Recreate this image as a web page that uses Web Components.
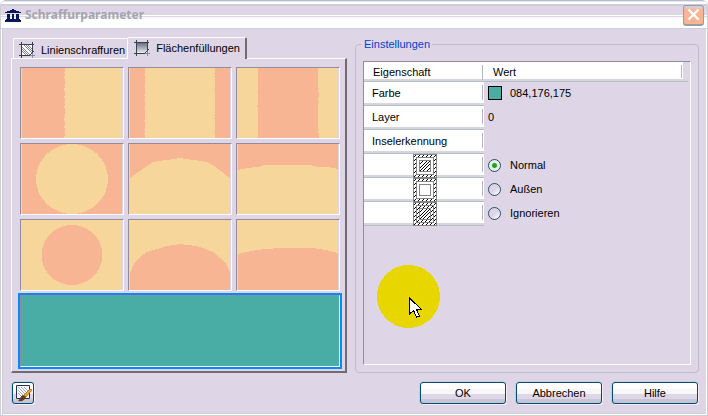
<!DOCTYPE html>
<html lang="de">
<head>
<meta charset="utf-8">
<title>Schraffurparameter</title>
<style>
  :root {
    --face: #ded6e7;
    --shade: #948c9c;
    --dark: #736b73;
    --line: #bdbdc6;
    --sand: #f7d69c;
    --salmon: #f7b594;
    --teal: #4aada5;
  }
  html, body { margin: 0; height: 100%; }
  body { font: 11px/14px "Liberation Sans", Arial, sans-serif; color: #000; background: #fff; }
</style>
</head>
<body>
<dialog-window heading="Schraffurparameter">
  <tab-panel>
    <swatch-grid></swatch-grid>
  </tab-panel>
  <settings-group heading="Einstellungen">
    <property-table></property-table>
  </settings-group>
  <tool-button slot="tools"></tool-button>
  <push-button slot="actions">OK</push-button>
  <push-button slot="actions">Abbrechen</push-button>
  <push-button slot="actions">Hilfe</push-button>
  <click-marker slot="overlay"></click-marker>
</dialog-window>

<script>
const define = (name, html, setup) => {
  const template = document.createElement('template');
  template.innerHTML = html;
  customElements.define(name, class extends HTMLElement {
    connectedCallback() {
      if (this.shadowRoot) return;
      const root = this.attachShadow({ mode: 'open' });
      root.append(template.content.cloneNode(true));
      if (setup) setup(this, root);
    }
  });
};

const setHeading = (host, root) => {
  root.querySelector('.heading').textContent = host.getAttribute('heading');
};

define('dialog-window', `
<style>
  :host { display: flex; flex-direction: column; position: relative; box-sizing: border-box; min-height: 100vh;
    background: var(--face); border: 1px solid #ceced6; border-top: 0; border-radius: 6px 6px 0 0; overflow: hidden;
    box-shadow: inset 1px 0 #fff, inset 2px 0 #ceced6, inset -1px 0 #fff, inset 0 -1px #fff, inset 0 -2px #ceced6; }
  header { display: flex; align-items: center; gap: 4px; box-sizing: border-box; height: 29px; padding: 2px 3px 0 4px;
    border-bottom: 1px solid #ceced6;
    background: linear-gradient(#b5bdce 0 1px, #e7e7ef 1px 2px, #fff 2px 4px, #ceced6 4px 6px, var(--face) 6px 15px, #fff 15px 16px, var(--face) 16px 17px, #f7f7f7 17px 19px, #fff 19px); }
  h1 { flex: 1; margin: 0; font: bold 12px/16px "Noto Sans", sans-serif; color: #a5a5ad; }
  .close { width: 21px; height: 21px; padding: 0; border: 1px solid #9c9ca5; border-bottom-width: 2px; border-radius: 3px;
    background: linear-gradient(#d6ced6 0 2px, var(--salmon) 3px); display: grid; place-items: center; }
  main { display: grid; grid-template-columns: minmax(0, 336fr) minmax(0, 344fr); gap: 8px; padding: 8px 8px 0 10px; }
  footer { display: flex; align-items: start; justify-content: space-between; padding: 9px 9px 8px 11px; }
  .actions { display: flex; gap: 10px; }
</style>
<header>
  <svg width="16" height="13" viewBox="0 0 16 13" shape-rendering="crispEdges" fill="#08185a" aria-hidden="true">
    <path d="M7 0h2v1h2v1h3v1h2v1H0V3h2V2h3V1h2zM2 5h3v5H2zM7 5h2v5H7zM11 5h3v5h-3zM1 10h14v1H1zM0 11h16v2H0z"/>
  </svg>
  <h1 class="heading"></h1>
  <button class="close" aria-label="Schließen">
    <svg width="13" height="13" viewBox="0 0 13 13" aria-hidden="true"><path d="M1.500 1.500l10 10M11.500 1.500l-10 10" stroke="#fff" stroke-width="2.400"/></svg>
  </button>
</header>
<main><slot></slot></main>
<footer><slot name="tools"></slot><div class="actions"><slot name="actions"></slot></div></footer>
<slot name="overlay"></slot>`, setHeading);

define('tab-panel', `
<style>
  :host { display: flex; flex-direction: column; min-width: 0; }
  .tabs { display: flex; align-items: end; padding-left: 2px; }
  button { display: flex; align-items: center; gap: 6px; height: 20px; box-sizing: border-box; padding: 2px 2px 0 5px;
    font: inherit; color: inherit; white-space: nowrap; background: var(--face);
    border: solid #fff; border-width: 1px 0 0 1px; border-radius: 2px 0 0 0; }
  button[aria-selected=true] { position: relative; height: 22px; margin-bottom: -1px; padding: 0 5px 2px 6px;
    border-right: 2px solid var(--dark); border-radius: 2px 2px 0 0; }
  .panel { padding: 8px 5px 4px 8px; border: solid; border-width: 1px 2px 2px 1px; border-color: #fff var(--dark) var(--dark) #fff; }
</style>
<div class="tabs" role="tablist">
  <button role="tab" aria-selected="false">
    <svg width="16" height="16" viewBox="0 0 16 16" shape-rendering="crispEdges" fill="none" aria-hidden="true">
      <path d="M3 3h10v10H3z" fill="#fff"/>
      <path d="M3 5l8 8M3 9l4 4M5 3l8 8M9 3l4 4M3 7l6 6M7 3l6 6" stroke="#848494"/>
      <path d="M0 2.500h15M2.500 0v16M0 13.500h11M13.500 0v11M10 14l5-5" stroke="#39424a"/>
      <path d="M11 13.500h5M13.500 11v5" stroke="#848cad"/>
    </svg>Linienschraffuren</button>
  <button role="tab" aria-selected="true">
    <svg width="16" height="16" viewBox="0 0 16 16" shape-rendering="crispEdges" fill="none" aria-hidden="true">
      <defs><linearGradient id="fade" x2="0" y2="1"><stop stop-color="#6b6b84"/><stop offset="1" stop-color="#e7efef"/></linearGradient></defs>
      <path d="M3 3h10v10H3z" fill="url(#fade)"/>
      <path d="M0 2.500h15M2.500 0v16M0 13.500h11M13.500 0v11M10 14l5-5" stroke="#39424a"/>
      <path d="M11 13.500h5M13.500 11v5" stroke="#848cad"/>
    </svg>Flächenfüllungen</button>
</div>
<div class="panel" role="tabpanel"><slot></slot></div>`);

const sandPath = d => `<path d="${d}" fill="#f7d69c"/>`;
const salmonPath = d => `<path d="${d}" fill="#f7b594"/>`;
const rough = (x, color, dash) => `<path d="M${x} 0v70" stroke="${color}" stroke-dasharray="${dash}"/>`;
const S = '#f7d69c', P = '#f7b594';
const swatches = [
  ['Linear', P, sandPath('M42 0h58v70H42z') + rough(42.5, P, '4 1 3 2 7 1 2 3 5 2')],
  ['Zylinder', P, sandPath('M15 0h70v70H15z') + rough(14.5, S, '0 6 1 11 1 8 1 3 1 2') + rough(84.5, P, '0 5 1 2 1 12 1 20')],
  ['Zylinder invertiert', S, salmonPath('M20 0h60v70H20z') + rough(19.5, P, '0 24 1 12 2 9') + rough(80.5, P, '0 20 1 3 5 4 2 6')],
  ['Kugel', P, `<ellipse cx="50" cy="35" rx="36" ry="35" fill="${S}"/>`],
  ['Halbkugel', P, sandPath('M0 34L4 31 10 27 17 22 23 18 36 16 50 14 63 16 77 18 84 22 91 27 97 32 100 34V70H0z')],
  ['Gewölbt', P, sandPath('M0 26L9 24 20 23 27 21H72L80 23 90 23 100 25V70H0z')],
  ['Kugel invertiert', S, `<ellipse cx="50" cy="35" rx="30.500" ry="30" fill="${P}"/>`],
  ['Halbkugel invertiert', S, salmonPath('M0 53L4 44 10 37 17 32 27 29 36 26 50 24 66 26 76 29 83 32 90 38 95 42 100 52V70H0z')],
  ['Gewölbt invertiert', S, salmonPath('M0 34L13 31 27 29 42 28H75L88 30 100 33V70H0z')],
  ['Vollfarbe', '#4aada5', '']
];
define('swatch-grid', `
<style>
  :host { display: grid; grid-template-columns: repeat(3, minmax(0, 1fr)); gap: 4px; }
  button { display: block; box-sizing: border-box; height: 72px; padding: 0 1px; border: 1px solid; background: var(--face);
    border-color: var(--shade) #fff #fff var(--shade); }
  svg { display: block; width: 100%; height: 100%; }
  button[aria-pressed=true] { grid-column: 1 / -1; padding: 0; outline: 2px solid #008cff; }
</style>`, (host, root) => {
  for (const [name, color, shape] of swatches) {
    const button = document.createElement('button');
    button.setAttribute('aria-label', name);
    button.setAttribute('aria-pressed', name === 'Vollfarbe');
    button.innerHTML = `<svg viewBox="0 0 100 70" preserveAspectRatio="none" shape-rendering="crispEdges" aria-hidden="true"><path d="M0 0h100v70H0z" fill="${color}"/>${shape}</svg>`;
    root.append(button);
  }
});

define('settings-group', `
<style>
  :host { display: flex; min-width: 0; }
  fieldset { flex: 1; display: flex; min-width: 0; margin: 0; padding: 10px 7px 7px; border: 1px solid var(--line); border-radius: 4px; }
  legend { padding: 0 2px; margin-left: -1px; color: #0042ce; }
  ::slotted(*) { flex: 1; }
</style>
<fieldset><legend class="heading"></legend><slot></slot></fieldset>`, setHeading);

define('property-table', `
<style>
  :host { display: block; min-width: 0; box-sizing: border-box; border: 1px solid; border-color: var(--shade) #fff #fff var(--shade); padding-right: 2px; }
  table { width: 100%; border-collapse: collapse; table-layout: fixed; }
  col:first-child { width: 120px; }
  th, td { box-sizing: border-box; height: 24px; padding: 0 4px; text-align: left; font-weight: normal; }
  th { padding: 0 0 2px 8px; background: linear-gradient(90deg, transparent calc(100% - 2px), #b5b5c6 0 calc(100% - 1px), transparent 0) 0 3px / 100% 15px no-repeat, linear-gradient(#fff calc(100% - 3px), #d6d6de 0 calc(100% - 1px), #b5bdc6 0); }
  thead th { height: 20px; padding: 1px 0 1px 9px; }
  thead th:last-child { background: linear-gradient(#b5b5c6, #b5b5c6) calc(100% - 6px) 3px / 1px 13px no-repeat,
    linear-gradient(90deg, transparent calc(100% - 5px), var(--face) 0) 0 0 / 100% 17px no-repeat,
    linear-gradient(#fff calc(100% - 3px), #d6d6de 0 calc(100% - 1px), #b5bdc6 0); }
  th.picture { padding: 0 0 0 1px; }
  .picture svg { display: block; margin: 0 auto; }
  .value { display: flex; align-items: center; gap: 8px; height: 22px; padding-bottom: 2px; }
  .color { box-sizing: border-box; width: 14px; height: 14px; padding: 0; border: 1px solid #000; background: var(--teal); }
  input { appearance: none; box-sizing: border-box; width: 13px; height: 13px; margin: 0 1px 0 0; border: 1px solid #21526b; border-radius: 50%;
    background: linear-gradient(135deg, var(--face) 50%, #fff); }
  input:checked { background: radial-gradient(circle, #21a521 0 2px, #e7efe7 3px); }
</style>
<svg width="0" height="0" style="position:absolute" aria-hidden="true">
  <defs>
    <pattern id="hatch" width="4" height="4" patternUnits="userSpaceOnUse"><path d="M0 3h1v1H0zM1 2h1v1H1zM2 1h1v1H2zM3 0h1v1H3z" fill="#000"/></pattern>
  </defs>
</svg>
<table>
  <colgroup><col><col></colgroup>
  <thead><tr><th scope="col">Eigenschaft</th><th scope="col">Wert</th></tr></thead>
  <tbody>
    <tr><th scope="row">Farbe</th><td><div class="value"><button class="color" aria-label="Farbe wählen"></button>084,176,175</div></td></tr>
    <tr><th scope="row">Layer</th><td><div class="value">0</div></td></tr>
    <tr><th scope="row">Inselerkennung</th><td></td></tr>
    <tr><th class="picture"><svg width="24" height="24" shape-rendering="crispEdges" fill="#fff" stroke="#848484" aria-hidden="true">
      <path d="M.5.5h23v23H.5z"/><path d="M.5.5h23v23H.5z" fill="url(#hatch)"/><path d="M3.500 3.500h17v17h-17z"/><path d="M6.500 6.500h11v11h-11z"/><path d="M7 10l3-3M7 14l7-7M7 17L17 7M10 17l7-7M14 17l3-3" stroke="#000"/></svg></th>
      <td><div class="value"><input type="radio" name="island" id="normal" checked><label for="normal">Normal</label></div></td></tr>
    <tr><th class="picture"><svg width="24" height="24" shape-rendering="crispEdges" fill="#fff" stroke="#848484" aria-hidden="true">
      <path d="M.5.5h23v23H.5z"/><path d="M.5.5h23v23H.5z" fill="url(#hatch)"/><path d="M3.500 3.500h17v17h-17z"/><path d="M6.500 6.500h11v11h-11z"/></svg></th>
      <td><div class="value"><input type="radio" name="island" id="outer"><label for="outer">Außen</label></div></td></tr>
    <tr><th class="picture"><svg width="24" height="24" shape-rendering="crispEdges" fill="#fff" stroke="#848484" aria-hidden="true">
      <path d="M.5.5h23v23H.5z"/><path d="M.5.5h23v23H.5z" fill="url(#hatch)"/><path d="M3.500 3.500h17v17h-17z" fill="none"/><path d="M6.500 6.500h11v11h-11z"/><path d="M7 10l3-3M7 14l7-7M7 17L17 7M10 17l7-7M14 17l3-3" stroke="#000"/></svg></th>
      <td><div class="value"><input type="radio" name="island" id="ignore"><label for="ignore">Ignorieren</label></div></td></tr>
  </tbody>
</table>`);

const buttonFace = `font: inherit; color: inherit; box-sizing: border-box; border: 1px solid #004a73; border-radius: 3px;
  box-shadow: 1px 1px #efeff7, 0 0 0 1px #ceced6;
  background: linear-gradient(#fff 0 30%, #f7f7f7 30% 55%, var(--face) 55% 80%, #c6c6d6 80%);`;

define('push-button', `
<style>
  :host { display: block; }
  button { ${buttonFace} min-width: 86px; height: 22px; padding: 0 8px; }
</style>
<button><slot></slot></button>`);

define('tool-button', `
<style>
  :host { display: block; }
  button { ${buttonFace} display: grid; place-items: center; width: 22px; height: 22px; padding: 0; }
</style>
<button aria-label="Schraffur bearbeiten">
  <svg width="18" height="18" viewBox="0 0 18 18" aria-hidden="true">
    <path d="M2.500 1.500h13v13h-13z" fill="#f7f7ff" stroke="#293152"/>
    <path d="M4 3l9 9M4 6l7 7M4 9l4 4M7 3l7 7M10 3l4 4" stroke="#8c9cad" stroke-width=".8"/>
    <path d="M10 11l6-6 2 1-6 7z" fill="#f7a518" stroke="#8c4a10" stroke-width=".6"/>
    <path d="M4 17c2-1 2-5 5-6l3 2c-1 3-4 5-8 4z" fill="#633918"/>
  </svg>
</button>`);

define('click-marker', `
<style>
  :host { position: absolute; left: 376px; top: 265px; pointer-events: none; }
  svg { display: block; }
</style>
<svg width="63" height="63" viewBox="0 0 63 63" shape-rendering="crispEdges" aria-hidden="true">
  <circle cx="31.500" cy="31.500" r="31.500" fill="#e7d600"/>
  <path d="M32.500 33v16l4-3.500 3 6.500 3-1-3-6.500h5z" fill="#fff" stroke="#000"/>
</svg>`);
</script>
</body>
</html>
